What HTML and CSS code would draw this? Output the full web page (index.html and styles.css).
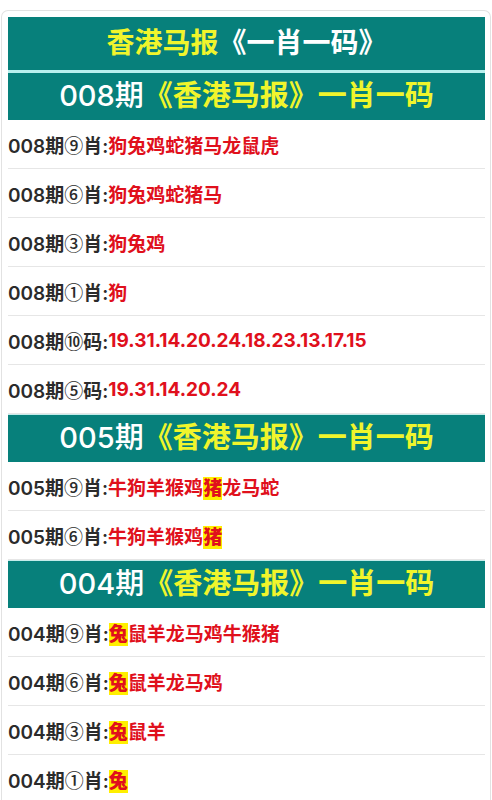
FILE: index.html
```html
<!DOCTYPE html>
<html lang="zh-CN">
<head>
  <meta charset="UTF-8">
  <title>香港马报《一肖一码》</title>
  <link rel="stylesheet" href="styles.css">
</head>
<body>
  <div class="card">
    <div class="title"><span class="yellow">香港马报</span>《一肖一码》</div>

    <div class="head">008期<span class="yellow">《香港马报》一肖一码</span></div>
    <div class="row">008期<span class="c">⑨</span>肖:<span class="red">狗兔鸡蛇猪马龙鼠虎</span></div>
    <div class="row">008期<span class="c">⑥</span>肖:<span class="red">狗兔鸡蛇猪马</span></div>
    <div class="row">008期<span class="c">③</span>肖:<span class="red">狗兔鸡</span></div>
    <div class="row">008期<span class="c">①</span>肖:<span class="red">狗</span></div>
    <div class="row">008期<span class="c">⑩</span>码:<span class="red">19.31.14.20.24.18.23.13.17.15</span></div>
    <div class="row">008期<span class="c">⑤</span>码:<span class="red">19.31.14.20.24</span></div>

    <div class="head">005期<span class="yellow">《香港马报》一肖一码</span></div>
    <div class="row">005期<span class="c">⑨</span>肖:<span class="red">牛狗羊猴鸡<b class="hit">猪</b>龙马蛇</span></div>
    <div class="row">005期<span class="c">⑥</span>肖:<span class="red">牛狗羊猴鸡<b class="hit">猪</b></span></div>

    <div class="head">004期<span class="yellow">《香港马报》一肖一码</span></div>
    <div class="row">004期<span class="c">⑨</span>肖:<span class="red"><b class="hit">兔</b>鼠羊龙马鸡牛猴猪</span></div>
    <div class="row">004期<span class="c">⑥</span>肖:<span class="red"><b class="hit">兔</b>鼠羊龙马鸡</span></div>
    <div class="row">004期<span class="c">③</span>肖:<span class="red"><b class="hit">兔</b>鼠羊</span></div>
    <div class="row">004期<span class="c">①</span>肖:<span class="red"><b class="hit">兔</b></span></div>
  </div>
</body>
</html>
```

FILE: styles.css
```css
body {
  margin: 0;
  background: #fff;
  font-family: Inter, "Noto Sans CJK SC", sans-serif;
}
.card {
  margin: 10px 1px 0 1px;
  padding: 6px 5px 0 6px;
  border: 1px solid #e2e2e2;
  border-bottom: none;
  border-radius: 7px 7px 0 0;
}
.title {
  background: #07807b;
  color: #fff;
  height: 53px;
  line-height: 53px;
  text-align: center;
  font-size: 28px;
  font-weight: 700;
  border-bottom: 3px solid #b8f0ee;
}
.head {
  box-sizing: border-box;
  background: #07807b;
  color: #fff;
  height: 48px;
  line-height: 46px;
  text-align: center;
  font-size: 29px;
  font-weight: 500;
  border-top: 1px solid #c4ecea;
}
.title + .head {
  height: 47px;
  border-top: none;
}
.yellow {
  color: #f0f52c;
}
.head .yellow {
  font-weight: 700;
}
.row {
  box-sizing: border-box;
  height: 49px;
  display: flex;
  align-items: center;
  border-bottom: 1px solid #e6e6e6;
  font-size: 19px;
  font-weight: 600;
  color: #2b2b2b;
  white-space: nowrap;
  font-variant-numeric: proportional-nums;
}
.c {
  font-family: "Noto Sans CJK SC", sans-serif;
  font-weight: 500;
}
.red {
  color: #e0101c;
  font-weight: 700;
}
.hit {
  background: #ffef00;
}
```
